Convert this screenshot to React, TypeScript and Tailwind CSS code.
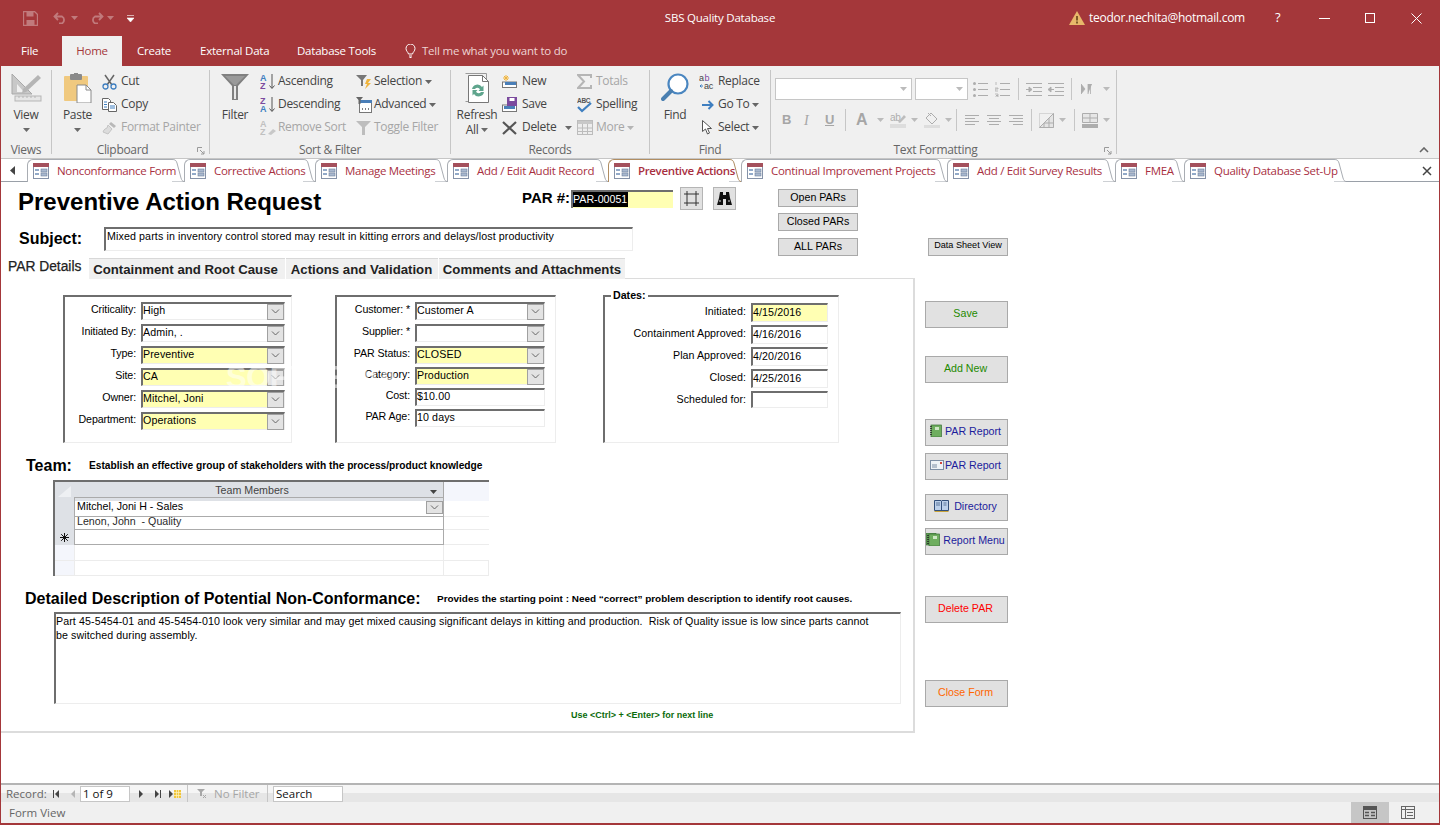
import React from "react";

const Caret = ({ color = "#6a6a6a", className = "" }: { color?: string; className?: string }) => (
  <svg width="7" height="4" viewBox="0 0 7 4" className={className}>
    <path d="M0 0h7L3.5 4z" fill={color} />
  </svg>
);

const Chevron = () => (
  <svg width="9" height="5" viewBox="0 0 9 5">
    <path d="M1 .5l3.5 3.5L8 .5" fill="none" stroke="#666" />
  </svg>
);

const FormIcon = () => (
  <svg width="16" height="16" viewBox="0 0 16 16" className="shrink-0">
    <rect x=".5" y=".5" width="15" height="15" fill="#fff" stroke="#8592a8" />
    <rect x="0" y="0" width="16" height="4" fill="#a4505c" />
    <path d="M2 7h4M2 11h4" stroke="#6f8fb8" strokeWidth="1.5" />
    <rect x="8" y="6" width="6" height="3" fill="#a9b8cf" stroke="#6d7f9c" strokeWidth=".6" />
    <rect x="8" y="10" width="6" height="3" fill="#a9b8cf" stroke="#6d7f9c" strokeWidth=".6" />
  </svg>
);

// ribbon icons
const ViewIcon = () => (
  <svg width="31" height="30" viewBox="0 0 31 30">
    <path d="M1 1l20 20H1z" fill="#c8c8c8" stroke="#a8a8a8" />
    <path d="M6 11l7 8H6z" fill="#f0f0f0" />
    <path d="M27 2l3 3-15 14-4 1 1-4z" fill="#b5b5b5" />
    <rect x="4" y="23" width="26" height="5" fill="#e6e6e6" stroke="#b5b5b5" />
    <path d="M8 23v2M12 23v2M16 23v2M20 23v2M24 23v2" stroke="#b5b5b5" />
  </svg>
);
const PasteIcon = () => (
  <svg width="29" height="30" viewBox="0 0 29 30">
    <rect x="1" y="3" width="24" height="25" rx="1" fill="#f0c97f" />
    <rect x="7" y="1" width="12" height="6" rx="1" fill="#8a8a8a" />
    <rect x="11" y="0" width="4" height="3" fill="#8a8a8a" />
    <path d="M14 12h9l5 5v13H14z" fill="#fff" stroke="#8a8a8a" />
    <path d="M23 12v5h5" fill="none" stroke="#8a8a8a" />
  </svg>
);
const CutIcon = () => (
  <svg width="15" height="16" viewBox="0 0 15 16">
    <path d="M3 1l7 10M12 1L5 11" stroke="#666" strokeWidth="1.5" />
    <circle cx="3.5" cy="12.5" r="2.5" fill="none" stroke="#3f7fc0" strokeWidth="1.3" />
    <circle cx="11.5" cy="12.5" r="2.5" fill="none" stroke="#3f7fc0" strokeWidth="1.3" />
  </svg>
);
const CopyIcon = () => (
  <svg width="15" height="14" viewBox="0 0 15 14">
    <path d="M.5.5h6l2 2v9h-8z" fill="#fff" stroke="#666" />
    <path d="M6.5 4.5h5l3 3v6h-8z" fill="#fff" stroke="#666" />
    <path d="M2 4h3M2 6.5h3M2 9h3M8 8h5M8 10h5" stroke="#3f7fc0" />
  </svg>
);
const PainterIcon = () => (
  <svg width="16" height="14" viewBox="0 0 16 14">
    <path d="M9 1l5 4-2 2-5-4z" fill="#b8b8b8" />
    <path d="M6 4l4 4-4 5-5-2 1-2 1-1 2-1z" fill="#dcdcdc" stroke="#c4c4c4" />
  </svg>
);
const FunnelIcon = () => (
  <svg width="28" height="28" viewBox="0 0 28 28">
    <path d="M0 1h28L17 13v14h-6V13z" fill="#808080" />
    <path d="M4 3h20l-9 9h-2z" fill="#9a9a9a" />
    <path d="M13 13h2v13h-2z" fill="#e8e8e8" />
  </svg>
);
const SortIcon = ({ first, second, c1, c2, disabled }: { first: string; second: string; c1: string; c2: string; disabled?: boolean }) => (
  <svg width="16" height="17" viewBox="0 0 16 17">
    <text x="0" y="7.5" fontSize="9" fontWeight="700" fontFamily="Liberation Sans" fill={c1}>{first}</text>
    <text x="0" y="16" fontSize="9" fontWeight="700" fontFamily="Liberation Sans" fill={c2}>{second}</text>
    {disabled ? (
      <path d="M8 15l5-5 3 2-5 4z" fill="#c8c8c8" />
    ) : (
      <path d="M12 1v14M9.5 12.5l2.5 3 2.5-3" fill="none" stroke="#555" />
    )}
  </svg>
);
const SelectionIcon = () => (
  <svg width="16" height="16" viewBox="0 0 16 16">
    <path d="M0 1h11L7 6v6H5V6z" fill="#777" />
    <path d="M11 5h4l-3 4h3l-6 6 2-5H9z" fill="#f0b43c" />
  </svg>
);
const AdvancedIcon = () => (
  <svg width="16" height="16" viewBox="0 0 16 16">
    <rect x="3.5" y="3.5" width="12" height="12" fill="#fff" stroke="#777" />
    <rect x="3" y="3" width="13" height="3" fill="#4a7fb8" />
    <path d="M0 0h7L4.5 3v4h-2V3z" fill="#666" />
    <path d="M6 12h1M9 12h1M12 12h1" stroke="#555" strokeWidth="1.5" />
  </svg>
);
const ToggleIcon = () => (
  <svg width="15" height="14" viewBox="0 0 15 14">
    <path d="M0 0h15L9 6v8H6V6z" fill="#bdbdbd" />
  </svg>
);
const RefreshIcon = () => (
  <svg width="25" height="30" viewBox="0 0 25 30">
    <path d="M.5.5h21v28H.5" fill="none" stroke="#9a9a9a" />
    <path d="M3.5 2.5h14l6 6v21h-20z" fill="#fff" stroke="#777" />
    <path d="M17.5 2.5v6h6" fill="none" stroke="#777" />
    <path d="M7 16a5.500 5.500 0 0 1 10-2l1.500-1.500V18h-5l1.500-1.800a3 3 0 0 0-5-.2z" fill="#5fa58d" />
    <path d="M19 19a5.500 5.500 0 0 1-10 2l-1.500 1.500V17h5L11 18.800a3 3 0 0 0 5 .2z" fill="#5fa58d" />
  </svg>
);
const NewIcon = () => (
  <svg width="15" height="13" viewBox="0 0 15 13">
    <rect x=".5" y="7" width="14" height="5.500" fill="#fff" stroke="#777" />
    <rect x="3" y="7" width="11" height="3" fill="#4a7fb8" />
    <path d="M4 0v6M1 3h6M2 1l4 4M6 1L2 5" stroke="#f0b43c" />
  </svg>
);
const SaveIcon = () => (
  <svg width="15" height="15" viewBox="0 0 15 15">
    <rect x=".5" y="8" width="14" height="6.500" fill="#fff" stroke="#777" />
    <rect x="2" y="9" width="11" height="3" fill="#4a7fb8" />
    <rect x="5" y="0" width="10" height="9" fill="#7b4a9e" />
    <rect x="7.500" y="1" width="5" height="3" fill="#fff" />
  </svg>
);
const DeleteIcon = () => (
  <svg width="15" height="14" viewBox="0 0 15 14">
    <path d="M1 1l13 12M14 1L1 13" stroke="#555" strokeWidth="2.2" />
  </svg>
);
const SigmaIcon = () => (
  <svg width="15" height="15" viewBox="0 0 15 15">
    <path d="M14 4V1H1l6 6.500L1 14h13v-3" fill="none" stroke="#b5b5b5" strokeWidth="2" />
  </svg>
);
const SpellIcon = () => (
  <svg width="15" height="16" viewBox="0 0 15 16">
    <text x="0" y="6" fontSize="6.500" fontWeight="700" fontFamily="Liberation Sans" fill="#555">ABC</text>
    <path d="M1 10l4 4 9-8" fill="none" stroke="#3f7fc0" strokeWidth="2.2" />
  </svg>
);
const MoreIcon = () => (
  <svg width="16" height="15" viewBox="0 0 16 15">
    <rect x=".5" y=".5" width="15" height="14" fill="#ededed" stroke="#bcbcbc" />
    <rect x="1" y="1" width="14" height="3" fill="#c8c8c8" />
    <path d="M1 8h14M1 11.500h14M5.500 4v10M10.500 4v10" stroke="#bcbcbc" />
  </svg>
);
const FindIcon = () => (
  <svg width="28" height="30" viewBox="0 0 28 30">
    <circle cx="17" cy="11" r="9.500" fill="#fff" stroke="#4a86c0" strokeWidth="2.2" />
    <path d="M10 18L2 26" stroke="#4a7fb0" strokeWidth="4" strokeLinecap="round" />
  </svg>
);
const ReplaceIcon = () => (
  <svg width="17" height="16" viewBox="0 0 17 16">
    <text x="0" y="7" fontSize="9" fontFamily="Liberation Sans" fill="#444">a</text>
    <text x="5.500" y="7" fontSize="9" fontFamily="Liberation Sans" fill="#7b4a9e">b</text>
    <text x="5" y="15" fontSize="9" fontFamily="Liberation Sans" fill="#444">ac</text>
    <path d="M4 12H1l1.500-1.500M1 12l1.500 1.500" fill="none" stroke="#3f7fc0" />
  </svg>
);
const GotoIcon = () => (
  <svg width="12" height="10" viewBox="0 0 12 10">
    <path d="M0 5h10M6.500 1L10.500 5 6.500 9" fill="none" stroke="#3f7fc0" strokeWidth="2" />
  </svg>
);
const SelectIcon = () => (
  <svg width="10" height="15" viewBox="0 0 10 15">
    <path d="M.5.5v11l3-2.500 2 5 2-1-2-4.500h4z" fill="#fff" stroke="#555" />
  </svg>
);

// greyed out formatting icons
const Lines = ({ kind }: { kind: "bullet" | "number" | "in" | "out" | "left" | "center" | "right" }) => {
  const s = "#adadad";
  if (kind === "bullet" || kind === "number")
    return (
      <svg width="15" height="15" viewBox="0 0 15 15">
        <path d="M5 1.500h10M5 7.500h10M5 13.500h10" stroke={s} />
        {kind === "bullet" ? (
          <g fill={s}>
            <circle cx="1.500" cy="1.500" r="1.500" />
            <circle cx="1.500" cy="7.500" r="1.500" />
            <circle cx="1.500" cy="13.500" r="1.500" />
          </g>
        ) : (
          <path d="M1 0v3M0 6h3v1H0v2h3M0 12h3v1.500H1 3V15H0" fill="none" stroke={s} strokeWidth=".8" />
        )}
      </svg>
    );
  if (kind === "in" || kind === "out")
    return (
      <svg width="16" height="13" viewBox="0 0 16 13">
        <path d="M0 .5h16M7 4.500h9M7 8.500h9M0 12.500h16" stroke={s} />
        <path d={kind === "in" ? "M0 6.500h3V4l3 2.500L3 9V6.500" : "M6 6.500H3V4L0 6.500 3 9V6.500"} fill={s} stroke={s} />
      </svg>
    );
  const d =
    kind === "left"
      ? "M0 .5h14M0 3.500h10M0 6.500h14M0 9.500h10"
      : kind === "center"
        ? "M0 .5h14M2 3.500h10M0 6.500h14M2 9.500h10"
        : "M0 .5h14M4 3.500h10M0 6.500h14M4 9.500h10";
  return (
    <svg width="14" height="10" viewBox="0 0 14 10">
      <path d={d} stroke={s} />
    </svg>
  );
};

const RowBtn = ({ icon, label, caret, disabled, gap = "w-[19px]" }: { icon: React.ReactNode; label: string; caret?: boolean; disabled?: boolean; gap?: string }) => (
  <div className={`flex h-[23px] items-center ${disabled ? "text-[#a6a6a6]" : "text-[#444]"}`}>
    <div className={`flex shrink-0 items-center ${gap}`}>{icon}</div>
    <span className="pb-[2px]">{label}</span>
    {caret && <Caret color={disabled ? "#b5b5b5" : "#666"} className="ml-[3px]" />}
  </div>
);

const LargeBtn = ({ icon, label, second, className = "" }: { icon: React.ReactNode; label: string; second?: React.ReactNode; className?: string }) => (
  <div className={`flex shrink-0 flex-col items-center text-[#444] ${className}`}>
    <div className="mt-[3px] flex h-[34px] items-start justify-center">{icon}</div>
    <div className="leading-[15px]">{label}</div>
    {second && <div className="flex h-[15px] items-center leading-[15px]">{second}</div>}
  </div>
);

const Launcher = () => (
  <svg width="8" height="8" viewBox="0 0 8 8" className="absolute right-[4px] bottom-[-1px]">
    <path d="M.5 5V.5H5M3 3l4 4M7 4v3H4" fill="none" stroke="#9a9a9a" />
  </svg>
);

const Group = ({ label, launcher, className = "", children }: { label: string; launcher?: boolean; className?: string; children: React.ReactNode }) => (
  <div className={`relative flex shrink-0 flex-col border-r border-[#c6c6c6] ${className}`}>
    <div className="flex h-[73px] shrink-0">{children}</div>
    <div className={`h-[14px] shrink-0 text-center leading-[14px] text-[#666] ${launcher ? "pr-[16px]" : ""}`}>{label}</div>
    {launcher && <Launcher />}
  </div>
);

const Ribbon = () => (
  <div className="flex h-[92px] shrink-0 bg-[#f0f0f0] py-[4px] text-[12px] tracking-[-0.3px]">
    <Group label="Views" className="w-[51px]">
      <LargeBtn icon={<ViewIcon />} label="View" second={<Caret />} className="w-full" />
    </Group>
    <Group label="Clipboard" launcher className="w-[158px]">
      <LargeBtn icon={<PasteIcon />} label="Paste" second={<Caret />} className="ml-[5px] w-[41px]" />
      <div className="ml-[4px]">
        <RowBtn icon={<CutIcon />} label="Cut" />
        <RowBtn icon={<CopyIcon />} label="Copy" />
        <RowBtn icon={<PainterIcon />} label="Format Painter" disabled />
      </div>
    </Group>
    <Group label="Sort & Filter" className="w-[241px]">
      <LargeBtn icon={<FunnelIcon />} label="Filter" className="ml-[7px] w-[36px]" />
      <div className="ml-[7px] w-[96px]">
        <RowBtn icon={<SortIcon first="A" second="Z" c1="#3f7fc0" c2="#7b4a9e" />} label="Ascending" gap="w-[18px]" />
        <RowBtn icon={<SortIcon first="Z" second="A" c1="#7b4a9e" c2="#3f7fc0" />} label="Descending" gap="w-[18px]" />
        <RowBtn icon={<SortIcon first="A" second="Z" c1="#c0c0c0" c2="#c0c0c0" disabled />} label="Remove Sort" disabled gap="w-[18px]" />
      </div>
      <div>
        <RowBtn icon={<SelectionIcon />} label="Selection" caret gap="w-[18px]" />
        <RowBtn icon={<AdvancedIcon />} label="Advanced" caret gap="w-[18px]" />
        <RowBtn icon={<ToggleIcon />} label="Toggle Filter" disabled gap="w-[18px]" />
      </div>
    </Group>
    <Group label="Records" className="w-[199px]">
      <LargeBtn
        icon={<RefreshIcon />}
        label="Refresh"
        second={
          <>
            All
            <Caret className="ml-[3px]" />
          </>
        }
        className="ml-[6px] w-[40px]"
      />
      <div className="ml-[5px] w-[75px]">
        <RowBtn icon={<NewIcon />} label="New" gap="w-[20px]" />
        <RowBtn icon={<SaveIcon />} label="Save" gap="w-[20px]" />
        <div className="flex h-[23px] items-center text-[#444]">
          <div className="flex w-[20px] items-center">
            <DeleteIcon />
          </div>
          <span className="pb-[2px]">Delete</span>
          <Caret className="ml-[9px]" />
        </div>
      </div>
      <div>
        <RowBtn icon={<SigmaIcon />} label="Totals" disabled />
        <RowBtn icon={<SpellIcon />} label="Spelling" />
        <RowBtn icon={<MoreIcon />} label="More" disabled caret />
      </div>
    </Group>
    <Group label="Find" className="w-[121px]">
      <LargeBtn icon={<FindIcon />} label="Find" className="ml-[9px] w-[32px]" />
      <div className="ml-[8px]">
        <RowBtn icon={<ReplaceIcon />} label="Replace" />
        <RowBtn icon={<span className="ml-[3px] flex"><GotoIcon /></span>} label="Go To" caret />
        <RowBtn icon={<span className="ml-[3px] flex"><SelectIcon /></span>} label="Select" caret />
      </div>
    </Group>
    <Group label="Text Formatting" launcher className="w-[346px]">
      <div className="flex flex-col pl-[4px] pt-[8px]">
        <div className="flex h-[22px] items-center">
          <div className="flex h-[22px] w-[137px] items-center justify-end border border-[#c6c6c6] bg-white pr-[4px]">
            <Caret color="#bbb" />
          </div>
          <div className="ml-[3px] flex h-[22px] w-[53px] items-center justify-end border border-[#c6c6c6] bg-white pr-[4px]">
            <Caret color="#bbb" />
          </div>
          <div className="ml-[5px]"><Lines kind="bullet" /></div>
          <div className="ml-[7px]"><Lines kind="number" /></div>
          <div className="ml-[8px] h-[22px] w-px bg-[#c6c6c6]" />
          <div className="ml-[7px]"><Lines kind="in" /></div>
          <div className="ml-[6px]"><Lines kind="out" /></div>
          <div className="ml-[7px] h-[22px] w-px bg-[#c6c6c6]" />
          <svg width="11" height="10" viewBox="0 0 11 10" className="ml-[9px]">
            <path d="M0 0l4 5-4 5zM7 10V0h4M9.500 0v10" fill="#adadad" stroke="#adadad" strokeWidth=".8" />
          </svg>
          <Caret color="#bbb" className="ml-[11px]" />
        </div>
        <div className="mt-[9px] flex h-[22px] items-center text-[#a6a6a6]">
          <span className="ml-[7px] w-[22px] font-['Liberation_Sans',sans-serif] text-[13px] font-bold">B</span>
          <span className="w-[21px] font-['Liberation_Serif',serif] text-[14px] italic">I</span>
          <span className="w-[20px] font-['Liberation_Sans',sans-serif] text-[13px] font-bold underline">U</span>
          <div className="h-[22px] w-px bg-[#c6c6c6]" />
          <span className="ml-[10px] w-[14px] font-['Liberation_Sans',sans-serif] text-[16px] font-bold">A</span>
          <Caret color="#bbb" className="ml-[7px]" />
          <svg width="16" height="16" viewBox="0 0 16 16" className="ml-[6px]">
            <text x="0" y="9" fontSize="10" fontFamily="Liberation Sans" fill="#adadad">ab</text>
            <path d="M8 10l6-7 2 2-6 6z" fill="#bdbdbd" />
            <rect x="0" y="12" width="16" height="4" fill="#ddd" />
          </svg>
          <Caret color="#bbb" className="ml-[5px]" />
          <svg width="16" height="16" viewBox="0 0 16 16" className="ml-[6px]">
            <path d="M7 1l6 6-5 5-6-6zM4 1l3 3" fill="none" stroke="#adadad" />
            <rect x="0" y="13" width="16" height="3" fill="#ddd" />
          </svg>
          <Caret color="#bbb" className="ml-[5px]" />
          <div className="ml-[4px] h-[22px] w-px bg-[#c6c6c6]" />
          <div className="ml-[8px]"><Lines kind="left" /></div>
          <div className="ml-[8px]"><Lines kind="center" /></div>
          <div className="ml-[8px]"><Lines kind="right" /></div>
          <div className="ml-[8px] h-[22px] w-px bg-[#c6c6c6]" />
          <svg width="15" height="15" viewBox="0 0 15 15" className="ml-[7px]">
            <path d="M.5.5h14v14H.5z" fill="none" stroke="#bbb" strokeDasharray="1 1" />
            <path d="M14.500 .5L.5 14.500h14zM5 10v4.500M10 5v9.500M5 10h9.500" fill="#e4e4e4" stroke="#adadad" />
          </svg>
          <Caret color="#bbb" className="ml-[5px]" />
          <div className="ml-[8px] h-[22px] w-px bg-[#c6c6c6]" />
          <svg width="16" height="15" viewBox="0 0 16 15" className="ml-[7px]">
            <path d="M.5.5h15v9H.5zM0 5h16M8 0v10" fill="#e6e6e6" stroke="#adadad" />
            <rect x="0" y="11" width="16" height="4" fill="#adadad" />
          </svg>
          <Caret color="#bbb" className="ml-[5px]" />
        </div>
      </div>
    </Group>
    <div className="relative flex-1">
      <svg width="10" height="6" viewBox="0 0 10 6" className="absolute right-[10px] bottom-[1px]">
        <path d="M1 5l4-4 4 4" fill="none" stroke="#666" strokeWidth="1.6" />
      </svg>
    </div>
  </div>
);

const docTabs = [
  { label: "Nonconformance Form", w: "w-[157px]" },
  { label: "Corrective Actions", w: "w-[131px]" },
  { label: "Manage Meetings", w: "w-[132px]" },
  { label: "Add / Edit Audit Record", w: "w-[161px]" },
  { label: "Preventive Actions", w: "w-[133px]", active: true },
  { label: "Continual Improvement Projects", w: "w-[206px]" },
  { label: "Add / Edit Survey Results", w: "w-[168px]" },
  { label: "FMEA", w: "w-[69px]" },
  { label: "Quality Database Set-Up", w: "w-[162px]" },
];

const DocTab = ({ label, w, active }: { label: string; w: string; active?: boolean }) => {
  const line = active ? "#b08d62" : "#a9adb3";
  return (
    <div className={`relative flex h-[23px] shrink-0 ${w} ${active ? "z-10" : ""}`}>
      <div className={`flex min-w-0 flex-1 items-center rounded-tl-[6px] border-t border-l bg-white pl-[5px] ${active ? "border-[#b08d62]" : "border-[#a9adb3]"}`}>
        <FormIcon />
        <span className={`relative z-10 ml-[8px] whitespace-nowrap text-[#a8303f] ${active ? "font-semibold tracking-[-0.35px]" : ""}`}>{label}</span>
      </div>
      <svg width="12" height="23" viewBox="0 0 12 23" className="shrink-0">
        <path d="M0 0c3 0 4 1 5 4l4 15c.6 2 1.500 3.500 3 3.500H0z" fill="#fff" />
        <path d="M0 .5c3 0 4 .5 5 3.500l4 15c.6 2 1.500 3.500 3 3.500" fill="none" stroke={line} />
      </svg>
      {active && <div className="absolute bottom-[-1px] left-0 right-[12px] h-px bg-white" />}
    </div>
  );
};

const DocTabs = () => (
  <div className="flex h-[24px] shrink-0 items-start border-t border-b border-t-[#c6c6c6] border-b-[#9aa0a8] bg-white text-[11.5px] tracking-[-0.3px]">
    <div className="flex h-[23px] w-[26px] shrink-0 items-center justify-center pr-[2px]">
      <svg width="6" height="9" viewBox="0 0 6 9">
        <path d="M5 0v9L0 4.500z" fill="#444" />
      </svg>
    </div>
    {docTabs.map((t) => (
      <DocTab key={t.label} {...t} />
    ))}
    <div className="flex h-[23px] flex-1 items-center justify-end pr-[7px]">
      <svg width="10" height="10" viewBox="0 0 10 10">
        <path d="M1 1l8 8M9 1L1 9" stroke="#444" strokeWidth="1.500" />
      </svg>
    </div>
  </div>
);

const Sunken = ({ className = "", children }: { className?: string; children?: React.ReactNode }) => (
  <div className={`border-t-2 border-r border-b border-l-2 border-t-[#6e6e6e] border-r-[#ededed] border-b-[#ededed] border-l-[#6e6e6e] ${className}`}>
    {children}
  </div>
);

const Combo = ({ value, yellow, w }: { value: string; yellow?: boolean; w: string }) => (
  <Sunken className={`flex h-[18px] items-center justify-between tracking-[0.1px] ${w} ${yellow ? "bg-[#ffffb3]" : "bg-white"}`}>
    <span className="whitespace-nowrap pb-[4px]">{value}</span>
    <div className="flex h-[16px] w-[17px] items-center justify-center border border-[#a0a0a0] bg-[#e3e3e3]">
      <Chevron />
    </div>
  </Sunken>
);

const Plain = ({ value, yellow, w, h = "h-[18px]", pb = "pb-[4px]" }: { value?: string; yellow?: boolean; w: string; h?: string; pb?: string }) => (
  <Sunken className={`flex items-center tracking-[0.1px] ${h} ${w} ${yellow ? "bg-[#ffffb3]" : "bg-white"}`}>
    <span className={`whitespace-nowrap ${pb}`}>{value}</span>
  </Sunken>
);

const FieldRow = ({ label, lw, children, className = "", labelClass = "tracking-[-0.1px]" }: { label: string; lw: string; children: React.ReactNode; className?: string; labelClass?: string }) => (
  <div className={`flex items-start ${className}`}>
    <div className={`whitespace-nowrap pr-[5px] text-right leading-[15px] ${lw} ${labelClass}`}>{label}</div>
    {children}
  </div>
);

const FormBtn = ({ className = "", children }: { className?: string; children: React.ReactNode }) => (
  <div className={`flex items-center justify-center border border-[#a9a9a9] bg-[#e1e1e1] ${className}`}>{children}</div>
);

const NotebookIcon = ({ double }: { double?: boolean }) => (
  <svg width={double ? 15 : 12} height="13" viewBox={double ? "0 0 15 13" : "0 0 12 13"} className="shrink-0">
    {double && <rect x="0" y="0" width="10" height="12" fill="#5f9a55" stroke="#3a6e38" strokeWidth=".6" />}
    <rect x={double ? 3 : 1} y="1" width="10.500" height="12" fill="#6fae5f" stroke="#3a6e38" strokeWidth=".7" />
    <rect x={double ? 7 : 5} y="3" width="4" height="3" fill="#cfe8c6" />
    <path d={double ? "M2 2v10" : "M1 2v10"} stroke="#222" strokeDasharray="1 1" strokeWidth="1.500" />
  </svg>
);
const MailIcon = () => (
  <svg width="14" height="10" viewBox="0 0 14 10" className="shrink-0">
    <rect x=".5" y=".5" width="13" height="9" fill="#eef2f7" stroke="#7d8ea5" />
    <path d="M2 5h5M2 7h5" stroke="#7d8ea5" />
    <rect x="10" y="2" width="2" height="2" fill="#d0453a" />
  </svg>
);
const BookIcon = () => (
  <svg width="15" height="13" viewBox="0 0 15 13" className="shrink-0">
    <path d="M.5 1.500h6.500l.5 1 .5-1h6.500v10H.5z" fill="#bcd0ea" stroke="#33507a" />
    <path d="M7.500 2.500v9" stroke="#33507a" />
    <path d="M2 4h4M2 6h4M9.500 4h3M9.500 6h3" stroke="#33507a" strokeWidth=".7" />
    <path d="M.5 12.500h14" stroke="#c9a33a" />
  </svg>
);

const FieldsetA = () => (
  <Sunken className="flex h-[148px] w-[229px] flex-col gap-[4px] pt-[5px]">
    {[
      ["Criticality:", "High", false],
      ["Initiated By:", "Admin, .", false],
      ["Type:", "Preventive", true],
      ["Site:", "CA", true],
      ["Owner:", "Mitchel, Joni", true],
      ["Department:", "Operations", true],
    ].map(([l, v, y]) => (
      <FieldRow key={l as string} label={l as string} lw="w-[76px]">
        <Combo value={v as string} yellow={y as boolean} w="w-[144px]" />
      </FieldRow>
    ))}
  </Sunken>
);

const FieldsetB = () => (
  <Sunken className="flex h-[148px] w-[221px] flex-col pt-[5px]">
    <FieldRow label="Customer: *" lw="w-[78px]"><Combo value="Customer A" w="w-[130px]" /></FieldRow>
    <FieldRow label="Supplier: *" lw="w-[78px]" className="mt-[4px]"><Combo value="" w="w-[130px]" /></FieldRow>
    <FieldRow label="PAR Status:" lw="w-[78px]" className="mt-[4px]"><Combo value="CLOSED" yellow w="w-[130px]" /></FieldRow>
    <FieldRow label="Category:" lw="w-[78px]" className="mt-[3px]"><Combo value="Production" yellow w="w-[130px]" /></FieldRow>
    <FieldRow label="Cost:" lw="w-[78px]" className="mt-[3px]"><Plain value="$10.00" w="w-[130px]" /></FieldRow>
    <FieldRow label="PAR Age:" lw="w-[78px]" className="mt-[3px]"><Plain value="10 days" w="w-[130px]" /></FieldRow>
  </Sunken>
);

const FieldsetC = () => (
  <div className="relative h-[148px] w-[236px]">
    <Sunken className="flex h-full w-full flex-col gap-[3px] pt-[6px]">
      <FieldRow label="Initiated:" lw="w-[146px]" labelClass="pt-[1px] tracking-[0.1px]"><Plain value="4/15/2016" yellow w="w-[77px]" h="h-[19px]" pb="pb-[2px]" /></FieldRow>
      <FieldRow label="Containment Approved:" lw="w-[146px]" labelClass="pt-[1px] tracking-[0.05px]"><Plain value="4/16/2016" w="w-[77px]" h="h-[19px]" pb="pb-[2px]" /></FieldRow>
      <FieldRow label="Plan Approved:" lw="w-[146px]" labelClass="pt-[1px] tracking-[0.05px]"><Plain value="4/20/2016" w="w-[77px]" h="h-[19px]" pb="pb-[2px]" /></FieldRow>
      <FieldRow label="Closed:" lw="w-[146px]" labelClass="pt-[1px] tracking-[0.05px]"><Plain value="4/25/2016" w="w-[77px]" h="h-[19px]" pb="pb-[2px]" /></FieldRow>
      <FieldRow label="Scheduled for:" lw="w-[146px]" labelClass="pt-[1px] tracking-[0.05px]"><Plain w="w-[77px]" h="h-[17px]" /></FieldRow>
    </Sunken>
    <span className="absolute top-[-7px] left-[8px] bg-white px-[2px] font-bold leading-[15px]">Dates:</span>
  </div>
);

const TeamTable = () => (
  <div className="ml-[52px] mt-[5px] h-[96px] w-[436px] border-t-2 border-l-2 border-[#6e6e6e] text-[#2b2b2b]">
    <div className="grid h-[15px] grid-cols-[19px_370px_45px]">
      <div className="flex items-center justify-center bg-[#dee1e6]">
        <svg width="14" height="11" viewBox="0 0 14 11"><path d="M13 0v11H0z" fill="#eef0f3" /></svg>
      </div>
      <div className="flex items-center border-r border-[#a9a9a9] bg-[#dee1e6]">
        <span className="flex-1 pb-[3px] text-center text-[#444]">Team Members</span>
        <Caret color="#444" className="mr-[6px]" />
      </div>
      <div className="bg-[#f4f6fc]" />
    </div>
    <div className="grid h-[16px] grid-cols-[19px_370px_45px]">
      <div className="bg-[#dee1e6]" />
      <div className="flex items-center justify-between border border-[#ababab] pl-[2px] text-black">
        <span className="pb-[2px]">Mitchel, Joni H - Sales</span>
        <div className="flex h-[13px] w-[17px] items-center justify-center border border-[#a0a0a0] bg-[#e3e3e3]"><Chevron /></div>
      </div>
      <div className="border-b border-[#ececec]" />
    </div>
    <div className="grid h-[16px] grid-cols-[19px_370px_45px]">
      <div className="bg-[#dee1e6]" />
      <div className="flex items-center whitespace-pre border-x border-b border-[#ababab] pl-[2px]">Lenon, John  - Quality</div>
      <div className="border-b border-[#ececec]" />
    </div>
    <div className="grid h-[16px] grid-cols-[19px_370px_45px]">
      <div className="flex items-center justify-center bg-[#dee1e6]">
        <svg width="9" height="9" viewBox="0 0 9 9"><path d="M4.500 0v9M0 4.500h9M1.200 1.200l6.600 6.600M7.800 1.200L1.200 7.800" stroke="#111" /></svg>
      </div>
      <div className="border-x border-b border-[#ababab]" />
      <div className="border-b border-[#ececec]" />
    </div>
    <div className="grid h-[16px] grid-cols-[19px_370px_45px]">
      <div className="border-b border-[#ececec] bg-[#f4f6fc]" />
      <div className="border-x border-b border-[#ececec]" />
      <div className="border-b border-[#ececec]" />
    </div>
    <div className="grid h-[15px] grid-cols-[19px_370px_45px]">
      <div className="border-b border-[#ececec] bg-[#f4f6fc]" />
      <div className="border-x border-b border-[#ececec]" />
      <div className="border-r border-b border-[#ececec]" />
    </div>
  </div>
);

const FormBody = () => (
  <div className="relative flex flex-1 bg-white pt-[1px] font-['Liberation_Sans',Arial,sans-serif] text-[10.67px] text-black">
    <div className="w-[914px] shrink-0">
      {/* header */}
      <div className="flex h-[75px]">
        <div className="w-[777px] shrink-0 pt-[4px]">
          <div className="flex h-[23px] items-center">
            <div className="ml-[17px] w-[504px] shrink-0 pt-[7px] text-[24px] font-bold leading-[28px]">Preventive Action Request</div>
            <div className="w-[49px] shrink-0 whitespace-nowrap text-[15px] font-bold">PAR #:</div>
            <Sunken className="flex h-[18px] w-[102px] items-center border-r-0 border-b-0 bg-[#ffffb3] text-[#fff]">
              <span className="bg-black pr-[1px] leading-[15px]">PAR-00051</span>
            </Sunken>
            <div className="ml-[7px] flex h-[23px] w-[23px] items-center justify-center border border-[#b5b5b5] bg-[#e1e1e1]">
              <svg width="15" height="15" viewBox="0 0 15 15">
                <path d="M3 0v15M12 0v15M0 3h15M0 12h15" stroke="#333" />
              </svg>
            </div>
            <div className="ml-[10px] flex h-[23px] w-[23px] items-center justify-center border border-[#b5b5b5] bg-[#e1e1e1]">
              <svg width="15" height="14" viewBox="0 0 15 14">
                <path d="M3 0h3v3h3V0h3l1 6 2 7H9V7H6v6H0l2-7z" fill="#111" />
                <path d="M2 9h2M11 9h2" stroke="#ddd" />
              </svg>
            </div>
          </div>
          <div className="mt-[17px] flex h-[24px] items-center">
            <div className="ml-[18px] w-[85px] shrink-0 text-[16px] font-bold">Subject:</div>
            <Sunken className="h-[24px] w-[529px] bg-white pl-[1px] tracking-[0.115px] leading-[14px]">
              Mixed parts in inventory control stored may result in kitting errors and delays/lost productivity
            </Sunken>
          </div>
        </div>
        <div className="flex w-[80px] flex-col pt-[6px]">
          <FormBtn className="h-[18px] pb-[2px]">Open PARs</FormBtn>
          <FormBtn className="mt-[6px] h-[18px] pb-[2px]">Closed PARs</FormBtn>
          <FormBtn className="mt-[7px] h-[18px] pb-[2px]">ALL PARs</FormBtn>
        </div>
      </div>

      {/* sub tabs */}
      <div className="flex h-[21px] text-[13.2px] font-bold text-[#222]">
        <div className="ml-[7px] w-[81px] shrink-0 text-[13.8px] font-normal leading-[18px] [-webkit-text-stroke:0.25px_#222]">PAR Details</div>
        <div className="flex w-[196px] shrink-0 items-center justify-center border-t border-[#d8d8d8] bg-[#f0f0f0] pt-[2px] pr-[3px]">Containment and Root Cause</div>
        <div className="ml-px flex w-[152px] shrink-0 items-center justify-center border-t border-[#d8d8d8] bg-[#f0f0f0] pt-[2px] pr-[1px]">Actions and Validation</div>
        <div className="ml-px flex w-[186px] shrink-0 items-center justify-center border-t border-[#d8d8d8] bg-[#f0f0f0] pt-[2px]">Comments and Attachments</div>
        <div className="flex-1 border-b border-[#dcdcdc]" />
      </div>

      {/* panel */}
      <div className="relative h-[454px] border-r-2 border-b-2 border-[#dcdcdc]">
        <div className="flex pt-[16px]">
          <div className="ml-[62px]"><FieldsetA /></div>
          <div className="ml-[43px]"><FieldsetB /></div>
          <div className="ml-[47px]"><FieldsetC /></div>
        </div>
        <div className="mt-[12px] flex h-[20px] items-center pt-[2px]">
          <div className="ml-[25px] w-[63px] shrink-0 text-[16px] font-bold">Team:</div>
          <div className="text-[10.2px] font-bold">Establish an effective group of stakeholders with the process/product knowledge</div>
        </div>
        <TeamTable />
        <div className="mt-[12px] flex h-[20px] items-center pt-[2px]">
          <div className="ml-[24px] w-[412px] shrink-0 text-[16px] font-bold">Detailed Description of Potential Non-Conformance:</div>
          <div className="text-[9.95px] font-bold">Provides the starting point : Need “correct” problem description to identify root causes.</div>
        </div>
        <Sunken className="ml-[53px] mt-[4px] h-[92px] w-[847px] bg-white tracking-[0.09px] leading-[14px]">
          Part 45-5454-01 and 45-5454-010 look very similar and may get mixed causing significant delays in kitting and production.&nbsp; Risk of Quality issue is low since parts cannot
          <br />
          be switched during assembly.
        </Sunken>
        <div className="ml-[570px] mt-[5px] text-[9px] font-bold leading-[12px] text-[#0b6b0b]">Use &lt;Ctrl&gt; + &lt;Enter&gt; for next line</div>
      </div>
    </div>

    {/* right column of buttons */}
    <div className="flex w-[93px] shrink-0 flex-col pl-[10px] pt-[55px]">
      <FormBtn className="ml-[3px] h-[18px] w-[80px] pb-[2px] text-[9.1px]">Data Sheet View</FormBtn>
      <FormBtn className="mt-[45px] h-[27px] pr-[2px] pb-[4px] text-[#1f8a00]">Save</FormBtn>
      <FormBtn className="mt-[28px] h-[27px] pr-[2px] pb-[4px] text-[#1f8a00]">Add New</FormBtn>
      <FormBtn className="mt-[36px] h-[27px] gap-[3px] pr-[2px] pb-[4px] text-[#1c1c9c]"><NotebookIcon />PAR Report</FormBtn>
      <FormBtn className="mt-[7px] h-[27px] gap-[1px] pr-[2px] pb-[4px] text-[#1c1c9c]"><MailIcon />PAR Report</FormBtn>
      <FormBtn className="mt-[14px] h-[27px] gap-[5px] pr-[2px] pb-[4px] text-[#1c1c9c]"><BookIcon />Directory</FormBtn>
      <FormBtn className="mt-[7px] h-[27px] gap-[2px] pr-[2px] pb-[4px] text-[#1c1c9c]"><NotebookIcon double />Report Menu</FormBtn>
      <FormBtn className="mt-[41px] h-[27px] pr-[2px] pb-[4px] text-[#ff0000]">Delete PAR</FormBtn>
      <FormBtn className="mt-[57px] h-[27px] pr-[2px] pb-[4px] text-[#ff6600]">Close Form</FormBtn>
    </div>

    <div className="pointer-events-none absolute top-[173px] left-[225px] text-[31px] font-bold tracking-[-0.5px] text-white opacity-50">SOFTPEDIA</div>
  </div>
);

const NavBar = () => (
  <div className="flex h-[19px] shrink-0 items-center border-t-2 border-[#b4b4b4] bg-[linear-gradient(#f5f5f5_0%,#f5f5f5_45%,#e6e6e6_46%,#e6e6e6_100%)] text-[11.5px] text-[#666]">
    <span className="ml-[5px] w-[47px] shrink-0">Record:</span>
    <svg width="6" height="8" viewBox="0 0 6 8" className="shrink-0"><path d="M0 0h1v8H0zM6 0v8L2 4z" fill="#444" /></svg>
    <svg width="4" height="8" viewBox="0 0 4 8" className="ml-[12px] shrink-0"><path d="M4 0v8L0 4z" fill="#b5b5b5" /></svg>
    <div className="ml-[5px] flex h-[16px] w-[50px] shrink-0 items-center border border-[#c6c6c6] bg-white pl-[2px] text-[#111]">1 of 9</div>
    <svg width="4" height="8" viewBox="0 0 4 8" className="ml-[9px] shrink-0"><path d="M0 0v8l4-4z" fill="#444" /></svg>
    <svg width="6" height="8" viewBox="0 0 6 8" className="ml-[12px] shrink-0"><path d="M5 0h1v8H5zM0 0v8l4-4z" fill="#444" /></svg>
    <svg width="12" height="8" viewBox="0 0 12 8" className="ml-[8px] shrink-0"><path d="M0 0v8l4-4z" fill="#444" /><rect x="5" y="0" width="7" height="8" fill="#f0c53c" /><path d="M5 2.500h7M5 5.500h7M7.500 0v8M9.500 0v8" stroke="#fff4c0" strokeWidth=".7" /></svg>
    <div className="ml-[6px] h-full w-px shrink-0 bg-[#c6c6c6]" />
    <svg width="10" height="10" viewBox="0 0 10 10" className="ml-[9px] shrink-0"><path d="M0 0h8L5 3v4H3V3z" fill="#a8a8a8" /><path d="M6 6l3 3M9 6L6 9" stroke="#a8a8a8" /></svg>
    <span className="ml-[7px] w-[53px] shrink-0 text-[#a6a6a6]">No Filter</span>
    <div className="h-full w-px shrink-0 bg-[#c6c6c6]" />
    <div className="ml-[5px] flex h-[16px] w-[70px] shrink-0 items-center border border-[#c6c6c6] bg-white pl-[2px] text-[#111]">Search</div>
  </div>
);

const StatusBar = () => (
  <div className="flex h-[21px] shrink-0 items-center justify-between bg-[#f0f0f0] text-[11.5px] text-[#666]">
    <span className="ml-[8px]">Form View</span>
    <div className="mr-[12px] flex h-full">
      <div className="flex w-[38px] items-center justify-center bg-[#c6c6c6]">
        <svg width="14" height="13" viewBox="0 0 14 13"><rect x=".5" y=".5" width="13" height="12" fill="none" stroke="#555" /><rect x="0" y="0" width="14" height="4" fill="#555" /><path d="M2 6.500h4M8 6.500h4M2 9.500h4M8 9.500h4" stroke="#555" strokeWidth="1.500" /></svg>
      </div>
      <div className="flex w-[38px] items-center justify-center">
        <svg width="14" height="13" viewBox="0 0 14 13"><rect x=".5" y=".5" width="13" height="12" fill="none" stroke="#666" /><path d="M0 3.500h14M4.500 0v13M6 6.500h6M6 9.500h6" stroke="#666" /></svg>
      </div>
    </div>
  </div>
);

export default function App() {
  return (
    <div className="flex h-[825px] w-[1440px] flex-col overflow-hidden border-x border-b-2 border-[#a4373a] bg-white font-['Open_Sans',sans-serif]">
      {/* title bar */}
      <div className="grid h-[36px] shrink-0 grid-cols-[1fr_auto_1fr] items-center bg-[#a4373a] text-[11.5px] tracking-[-0.22px] text-white">
        <div className="flex items-center pl-[22px]">
          <svg width="15" height="15" viewBox="0 0 15 15"><path d="M.5.5h11l3 3v11H.5z" fill="none" stroke="#c17a7c" strokeWidth="1.300" /><rect x="3.500" y="1" width="7" height="4.500" fill="#c17a7c" /><rect x="3.500" y="9" width="8" height="5" fill="#c17a7c" /></svg>
          <svg width="15" height="12" viewBox="0 0 15 12" className="ml-[15px]"><path d="M5 1L1.500 4.500 5 8M2 4.500h7a4 4 0 0 1 0 7H6" fill="none" stroke="#c17a7c" strokeWidth="1.800" /></svg>
          <Caret color="#c17a7c" className="ml-[3px]" />
          <svg width="15" height="12" viewBox="0 0 15 12" className="ml-[11px]"><path d="M10 1l3.500 3.500L10 8M13 4.500H6a4 4 0 0 0 0 7h3" fill="none" stroke="#c17a7c" strokeWidth="1.800" /></svg>
          <Caret color="#c17a7c" className="ml-[3px]" />
          <svg width="7" height="7" viewBox="0 0 7 7" className="ml-[13px]"><path d="M0 .5h7M0 3h7L3.500 7z" fill="#fff" stroke="#fff" strokeWidth=".6" /></svg>
        </div>
        <div>SBS Quality Database</div>
        <div className="flex items-center justify-end">
          <svg width="16" height="14" viewBox="0 0 16 14"><path d="M8 0l8 14H0z" fill="#e8b86a" /><path d="M8 5v4.500M8 10.500v2" stroke="#5a3a10" strokeWidth="1.500" /></svg>
          <span className="ml-[4px] w-[186px] text-[12px] tracking-[-0.26px]">teodor.nechita@hotmail.com</span>
          <span className="w-[44px] text-[13px]">?</span>
          <svg width="11" height="1" viewBox="0 0 11 1"><path d="M0 .5h11" stroke="#fff" /></svg>
          <svg width="10" height="10" viewBox="0 0 10 10" className="ml-[35px]"><rect x=".5" y=".5" width="9" height="9" fill="none" stroke="#fff" /></svg>
          <svg width="11" height="11" viewBox="0 0 11 11" className="ml-[36px] mr-[17px]"><path d="M.5.5l10 10M10.500.5l-10 10" stroke="#fff" /></svg>
        </div>
      </div>

      {/* ribbon tabs */}
      <div className="flex h-[30px] shrink-0 items-stretch bg-[#a4373a] text-[11.5px] tracking-[-0.22px] text-white">
        <div className="ml-[20px] flex w-[41px] items-center">File</div>
        <div className="flex w-[60px] items-center justify-center bg-[#f0f0f0] text-[#a4373a]">Home</div>
        <div className="ml-[15px] flex w-[63px] items-center">Create</div>
        <div className="flex w-[97px] items-center">External Data</div>
        <div className="flex w-[108px] items-center">Database Tools</div>
        <div className="flex items-center text-[#eed4d4]">
          <svg width="11" height="14" viewBox="0 0 11 14" className="mr-[6px]"><path d="M3.500 10C3 8 1 7 1 4.500a4.500 4.500 0 0 1 9 0C10 7 8 8 7.500 10zM4 12h3M4.500 13.500h2" fill="none" stroke="#fff" /></svg>
          Tell me what you want to do
        </div>
      </div>

      <Ribbon />
      <DocTabs />
      <FormBody />
      <NavBar />
      <StatusBar />
    </div>
  );
}
